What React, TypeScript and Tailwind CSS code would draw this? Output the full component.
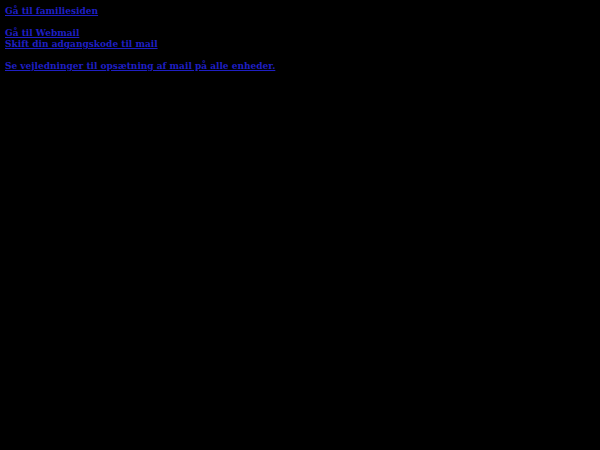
export default function App() {
  const link = "underline text-[#1f1fc4] font-bold";
  return (
    <div className="min-h-[450px] w-full bg-black px-[5px] pt-[6px] text-[9px] leading-[11px] font-['DejaVu_Serif',serif]">
      <div>
        <a href="#" className={link}>Gå til familiesiden</a>
      </div>
      <div className="h-[11px]" />
      <div>
        <a href="#" className={link}>Gå til Webmail</a>
      </div>
      <div>
        <a href="#" className={link}>Skift din adgangskode til mail</a>
      </div>
      <div className="h-[11px]" />
      <div>
        <a href="#" className={link}>Se vejledninger til opsætning af mail på alle enheder.</a>
      </div>
    </div>
  );
}
